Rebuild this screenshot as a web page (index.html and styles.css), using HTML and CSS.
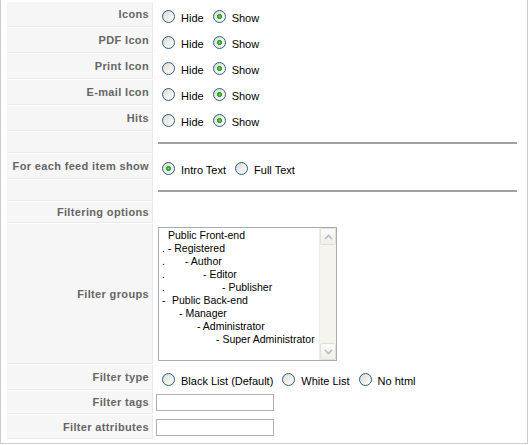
FILE: index.html
```html
<!DOCTYPE html>
<html>
<head>
<meta charset="utf-8">
<link rel="stylesheet" href="styles.css">
</head>
<body>
<div class="panel">
  <div class="row r25">
    <div class="key">Icons</div>
    <div class="val radios">
      <label class="opt"><input type="radio" name="icons"><span>Hide</span></label>
      <label class="opt"><input type="radio" name="icons" checked><span>Show</span></label>
    </div>
  </div>
  <div class="row r25">
    <div class="key">PDF Icon</div>
    <div class="val radios">
      <label class="opt"><input type="radio" name="pdf"><span>Hide</span></label>
      <label class="opt"><input type="radio" name="pdf" checked><span>Show</span></label>
    </div>
  </div>
  <div class="row r25">
    <div class="key">Print Icon</div>
    <div class="val radios">
      <label class="opt"><input type="radio" name="print"><span>Hide</span></label>
      <label class="opt"><input type="radio" name="print" checked><span>Show</span></label>
    </div>
  </div>
  <div class="row r25">
    <div class="key">E-mail Icon</div>
    <div class="val radios">
      <label class="opt"><input type="radio" name="email"><span>Hide</span></label>
      <label class="opt"><input type="radio" name="email" checked><span>Show</span></label>
    </div>
  </div>
  <div class="row r25">
    <div class="key">Hits</div>
    <div class="val radios">
      <label class="opt"><input type="radio" name="hits"><span>Hide</span></label>
      <label class="opt"><input type="radio" name="hits" checked><span>Show</span></label>
    </div>
  </div>
  <div class="row r21">
    <div class="key"></div>
    <div class="val"><hr class="sep"></div>
  </div>
  <div class="row r25">
    <div class="key">For each feed item show</div>
    <div class="val radios">
      <label class="opt"><input type="radio" name="feed" checked><span>Intro Text</span></label>
      <label class="opt"><input type="radio" name="feed"><span>Full Text</span></label>
    </div>
  </div>
  <div class="row r21">
    <div class="key"></div>
    <div class="val"><hr class="sep"></div>
  </div>
  <div class="row r21">
    <div class="key">Filtering options</div>
    <div class="val"></div>
  </div>
  <div class="row r140">
    <div class="key">Filter groups</div>
    <div class="val">
      <div class="listbox">
        <div class="items">
          <div class="item"><span class="i6">Public Front-end</span></div>
          <div class="item">. - Registered</div>
          <div class="item"><span class="lead">.</span><span class="i23">- Author</span></div>
          <div class="item"><span class="lead">.</span><span class="i41">- Editor</span></div>
          <div class="item"><span class="lead">.</span><span class="i60">- Publisher</span></div>
          <div class="item"><span class="lead">-</span><span class="i10">Public Back-end</span></div>
          <div class="item"><span class="i17">- Manager</span></div>
          <div class="item"><span class="i35">- Administrator</span></div>
          <div class="item"><span class="i54">- Super Administrator</span></div>
        </div>
        <div class="scrollbar">
          <div class="sbtn"><svg width="9" height="6" viewBox="0 0 9 6"><polyline points="1,5 4.5,1.5 8,5" fill="none" stroke="#b4bccb" stroke-width="1.6"/></svg></div>
          <div class="sbtn"><svg width="9" height="6" viewBox="0 0 9 6"><polyline points="1,1 4.5,4.5 8,1" fill="none" stroke="#b4bccb" stroke-width="1.6"/></svg></div>
        </div>
      </div>
    </div>
  </div>
  <div class="row r25">
    <div class="key">Filter type</div>
    <div class="val radios">
      <label class="opt"><input type="radio" name="ftype"><span>Black List (Default)</span></label>
      <label class="opt"><input type="radio" name="ftype"><span>White List</span></label>
      <label class="opt"><input type="radio" name="ftype"><span>No html</span></label>
    </div>
  </div>
  <div class="row r23">
    <div class="key">Filter tags</div>
    <div class="val"><input class="text" type="text"></div>
  </div>
  <div class="row r24">
    <div class="key">Filter attributes</div>
    <div class="val"><input class="text" type="text"></div>
  </div>
</div>
</body>
</html>
```
FILE: styles.css
```css
* { box-sizing: border-box; }
html, body { margin: 0; padding: 0; background: #fff; }
body {
  font-family: "Liberation Sans", Arial, sans-serif;
  font-size: 11px;
  color: #000;
  width: 529px;
}
.panel {
  width: 528px;
  border: 1px solid #cccccc;
  border-top: none;
  padding: 2px 6px 3px 6px;
  background: #fff;
}
.row {
  display: flex;
  margin-bottom: 1px;
}
.r21 { height: 21px; }
.r23 { height: 23px; }
.r24 { height: 24px; }
.r25 { height: 25px; }
.r140 { height: 140px; }
.key {
  width: 146px;
  flex: none;
  background: #f6f6f6;
  border-right: 1px solid #e9e9e9;
  border-bottom: 1px solid #e9e9e9;
  color: #666666;
  font-weight: bold;
  letter-spacing: 0.35px;
  display: flex;
  align-items: center;
  justify-content: flex-end;
  padding-right: 3px;
}
.val {
  flex: 1;
  display: flex;
  align-items: center;
  padding-left: 0;
}
.radios { padding-top: 4px; }
.opt {
  display: flex;
  align-items: center;
}
.opt span { padding-top: 2px; }
.opt input {
  -webkit-appearance: none;
  appearance: none;
  width: 13px;
  height: 13px;
  margin: 0 6px 0 9px;
  border: 1px solid #2f5a88;
  border-radius: 50%;
  background: linear-gradient(135deg, #d6d6ce 0%, #ececE6 45%, #ffffff 100%);
}
.opt input:checked {
  background: radial-gradient(circle at 50% 50%, #7fe07f 0, #2fb42f 1.3px, #21a121 2.2px, rgba(33,161,33,0) 2.8px),
              linear-gradient(135deg, #d6d6ce 0%, #ececE6 45%, #ffffff 100%);
}
.sep {
  flex: 1;
  height: 2px;
  border: none;
  background: #a0a0a0;
  margin: 0 4px 0 5px;
}
.listbox {
  margin-left: 5px;
  width: 179px;
  height: 134px;
  border: 1px solid #a5acb2;
  display: flex;
  background: #fff;
}
.items {
  flex: 1;
  padding: 1px 0 0 3px;
  font-size: 10.5px;
  line-height: 13px;
  white-space: nowrap;
  color: #000;
}
.item { display: flex; }
.lead { width: 0; overflow: visible; }
.i6 { padding-left: 6px; }
.i10 { padding-left: 10px; }
.i17 { padding-left: 17px; }
.i23 { padding-left: 23px; }
.i35 { padding-left: 35px; }
.i41 { padding-left: 41px; }
.i54 { padding-left: 54px; }
.i60 { padding-left: 60px; }
.scrollbar {
  width: 17px;
  flex: none;
  background: #f5f4ef;
  border-left: 1px solid #eeede5;
  display: flex;
  flex-direction: column;
  justify-content: space-between;
}
.sbtn {
  height: 17px;
  border: 1px solid #e1e1d9;
  border-radius: 2px;
  background: linear-gradient(180deg, #fbfbf8 0%, #f0efe8 100%);
  display: flex;
  align-items: center;
  justify-content: center;
}
.text {
  margin: 0 0 0 3px;
  width: 118px;
  height: 17px;
  border: 1px solid #b0b0b0;
  padding: 0 2px;
  font-family: "Liberation Sans", Arial, sans-serif;
  font-size: 11px;
  background: #fff;
}
```
